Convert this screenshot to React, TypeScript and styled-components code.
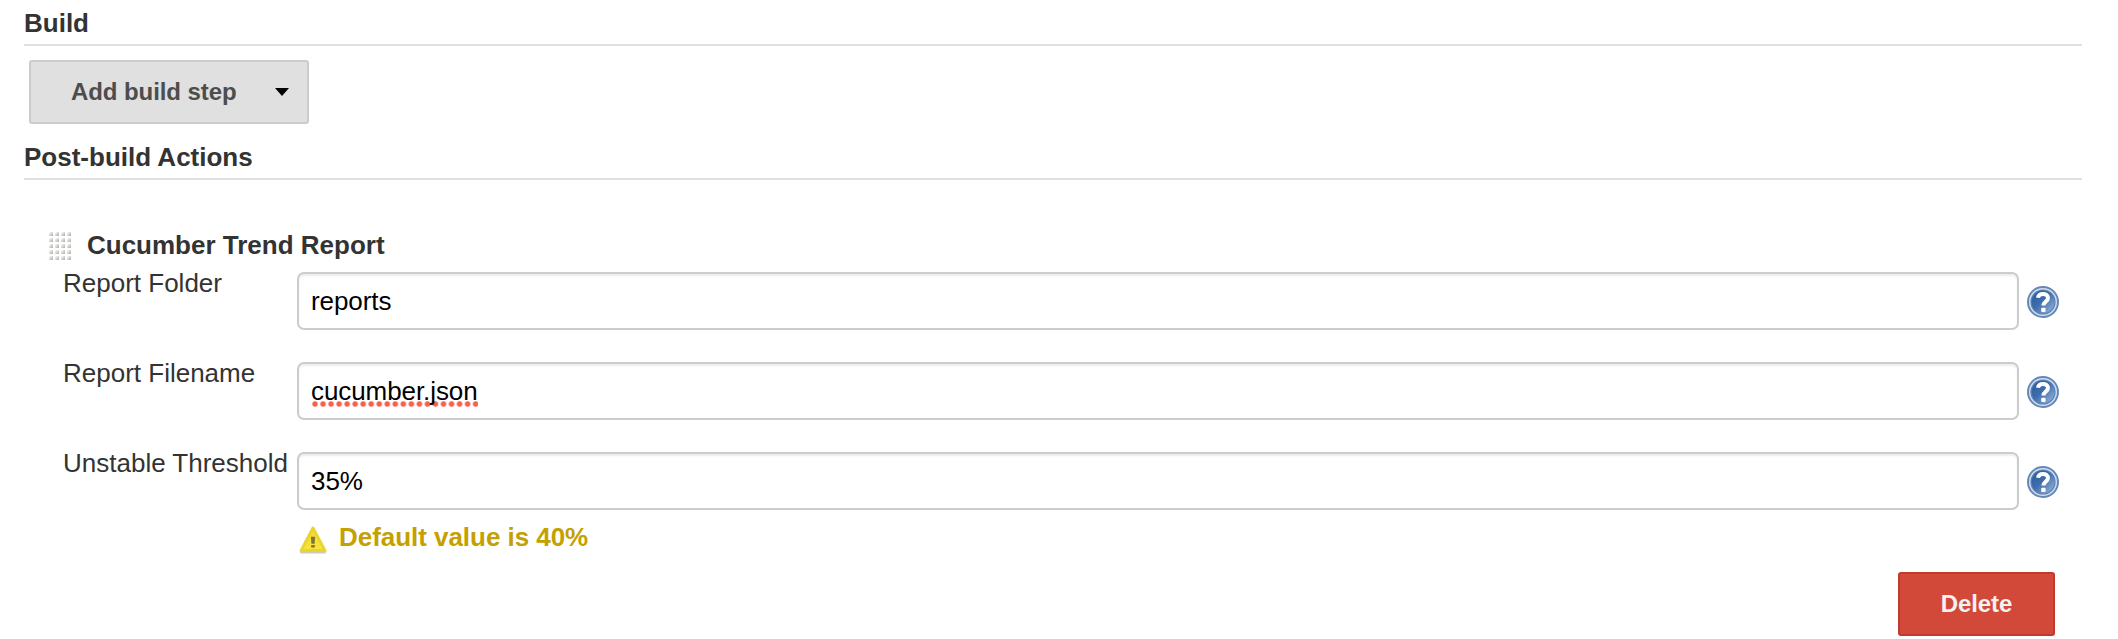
import React from "react";
import styled, { createGlobalStyle } from "styled-components";

const GlobalStyle = createGlobalStyle`
  * { box-sizing: border-box; }
  body {
    margin: 0;
    background: #fff;
    color: #333;
    font: 26px/30px "Liberation Sans", Helvetica, Arial, sans-serif;
  }
`;

const Page = styled.main`
  display: flex;
  flex-direction: column;
  width: 2118px;
  height: 639px;
  padding: 8px 36px 0 24px;
  overflow: hidden;
`;

const SectionHeader = styled.h2`
  margin: 0;
  height: 38px;
  border-bottom: 2px solid #e0e0e0;
  font-size: 26px;
  font-weight: bold;
  line-height: 30px;
`;

const StepBar = styled.div`
  padding: 14px 0 18px 5px;
`;

const Button = styled.button<{ $danger?: boolean }>`
  display: inline-flex;
  align-items: center;
  justify-content: ${(p) => (p.$danger ? "center" : "space-between")};
  width: ${(p) => (p.$danger ? 157 : 280)}px;
  height: 64px;
  padding: ${(p) => (p.$danger ? "0" : "0 18px 0 40px")};
  border: 2px solid ${(p) => (p.$danger ? "#c03a2b" : "#ccc")};
  border-radius: 3px;
  background: ${(p) => (p.$danger ? "#d24939" : "#e0e0e0")};
  color: ${(p) => (p.$danger ? "#f2f2f2" : "#4d4d4d")};
  font: bold 24px/28px "Liberation Sans", Helvetica, Arial, sans-serif;
  letter-spacing: -0.08px;
  vertical-align: top;
`;

const Action = styled.section`
  display: flex;
  flex-direction: column;
  padding-top: 50px;
`;

const ActionTitle = styled.div`
  display: flex;
  align-items: center;
  gap: 16px;
  height: 30px;
  padding-left: 25px;
  font-weight: bold;
  svg { position: relative; top: 1px; }
`;

const Field = styled.div`
  display: grid;
  grid-template-columns: 234px 1722px 40px;
  height: 58px;
  margin: 12px 0 20px 39px;
`;

const Label = styled.label`
  margin-top: -4px;
  white-space: nowrap;
`;

const InputBox = styled.div`
  display: flex;
  align-items: center;
  border: 2px solid #ccc;
  border-radius: 7px;
  padding: 0 12px 2px;
  color: #000;
  box-shadow: inset 0 2px 2px rgba(0, 0, 0, 0.075);
`;

const Value = styled.span<{ $misspelled?: boolean }>`
  height: 34px;
  line-height: 30px;
  padding-top: 3px;
  letter-spacing: -0.08px;
  ${(p) =>
    p.$misspelled &&
    `background: radial-gradient(circle at 4px 3px, #f9604c 2.2px, rgba(249, 96, 76, 0) 3.3px) 0 100% / 8.04px 6px repeat-x;`}
`;

const Help = styled.div`
  display: flex;
  align-items: center;
  padding: 2px 0 0 8px;
  svg { flex: none; }
`;

const Warning = styled.div`
  display: flex;
  align-items: flex-start;
  gap: 11px;
  height: 50px;
  margin-top: -8px;
  padding-left: 274px;
  color: #c4a000;
  font-weight: bold;
  letter-spacing: -0.04px;
  svg { margin-top: 3px; }
`;

const Footer = styled.div`
  display: flex;
  justify-content: flex-end;
  padding-right: 27px;
`;

const Caret = () => (
  <svg width="14" height="8" viewBox="0 0 14 8">
    <path d="M0 0h14L7 8z" fill="#000" />
  </svg>
);

const Grip = () => (
  <svg width="22" height="28" viewBox="0 0 22 28">
    <defs>
      <linearGradient id="dot" x1="0" y1="0" x2="1" y2="1">
        <stop offset="0.1" stopColor="#fafaf9" />
        <stop offset="0.5" stopColor="#d6d6d2" />
        <stop offset="0.9" stopColor="#b4b4ae" />
      </linearGradient>
    </defs>
    {[0, 6, 12, 18].map((x) =>
      [0, 6, 12, 18, 24].map((y) => (
        <rect key={`${x}-${y}`} x={x} y={y} width="4" height="4" fill="url(#dot)" />
      ))
    )}
  </svg>
);

const HelpIcon = () => (
  <svg width="32" height="32" viewBox="0 0 32 32">
    <defs>
      <linearGradient id="disc" x1="0.1" y1="0.1" x2="0.9" y2="0.9">
        <stop offset="0" stopColor="#2f5fa0" />
        <stop offset="0.45" stopColor="#3f6cab" />
        <stop offset="1" stopColor="#8fb0d8" />
      </linearGradient>
    </defs>
    <circle cx="16" cy="16" r="15" fill="#d3dfee" stroke="#6688b8" strokeWidth="2" />
    <circle cx="16" cy="16" r="12" fill="url(#disc)" stroke="#5a80b5" strokeWidth="1.2" />
    <path
      d="M11 11.8C11.3 9.2 13.2 8 16 8c3 0 5 1.5 5 4 0 3.4-4.6 3.6-4.6 7.6"
      fill="none"
      stroke="#fff"
      strokeWidth="4"
    />
    <rect x="14.2" y="21.8" width="4.4" height="4.2" rx="1" fill="#fff" />
  </svg>
);

const WarningIcon = () => (
  <svg width="30" height="30" viewBox="0 0 30 30">
    <defs>
      <linearGradient id="sign" x1="0" y1="0" x2="0" y2="1">
        <stop offset="0" stopColor="#efd932" />
        <stop offset="1" stopColor="#fbe53c" />
      </linearGradient>
    </defs>
    <path d="M3 27.6h24" stroke="#cfccb4" strokeWidth="1.8" strokeLinecap="round" />
    <path
      d="M15 3 27 25.6H3z"
      fill="url(#sign)"
      stroke="#ecd430"
      strokeWidth="3"
      strokeLinejoin="round"
    />
    <path d="M12.9 11.8h4.2l-.5 7h-3.2zM13.2 20h3.6v2.6h-3.6z" fill="#80752c" />
  </svg>
);

const fields = [
  { label: "Report Folder", value: "reports" },
  { label: "Report Filename", value: "cucumber.json", misspelled: true },
  { label: "Unstable Threshold", value: "35%" },
];

export default function App() {
  return (
    <Page>
      <GlobalStyle />
      <SectionHeader>Build</SectionHeader>
      <StepBar>
        <Button>
          Add build step
          <Caret />
        </Button>
      </StepBar>
      <SectionHeader>Post-build Actions</SectionHeader>
      <Action>
        <ActionTitle>
          <Grip />
          Cucumber Trend Report
        </ActionTitle>
        {fields.map((f) => (
          <Field key={f.label}>
            <Label>{f.label}</Label>
            <InputBox>
              <Value $misspelled={f.misspelled}>{f.value}</Value>
            </InputBox>
            <Help>
              <HelpIcon />
            </Help>
          </Field>
        ))}
        <Warning>
          <WarningIcon />
          Default value is 40%
        </Warning>
        <Footer>
          <Button $danger>Delete</Button>
        </Footer>
      </Action>
    </Page>
  );
}
